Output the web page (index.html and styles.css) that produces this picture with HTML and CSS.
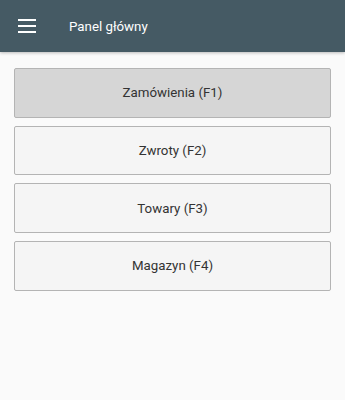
FILE: index.html
```html
<!DOCTYPE html>
<html lang="pl">

<head>
    <meta charset="UTF-8">
    <meta name="viewport" content="width=device-width, initial-scale=1.0">
    <title>Panel główny</title>
    <link rel="stylesheet" href="styles.css">
</head>

<body>
    <header class="toolbar">
        <button class="menu-button" aria-label="Menu">
            <svg width="18" height="14" viewBox="0 0 18 14">
                <rect x="0" y="0" width="18" height="2" fill="#fff" />
                <rect x="0" y="6" width="18" height="2" fill="#fff" />
                <rect x="0" y="12" width="18" height="2" fill="#fff" />
            </svg>
        </button>
        <h1 class="toolbar-title">Panel główny</h1>
    </header>

    <main class="menu-list">
        <button class="menu-item selected">Zamówienia (F1)</button>
        <button class="menu-item">Zwroty (F2)</button>
        <button class="menu-item">Towary (F3)</button>
        <button class="menu-item">Magazyn (F4)</button>
    </main>
</body>

</html>
```

FILE: styles.css
```css
body {
    font-family: Roboto, "Liberation Sans", sans-serif;
    margin: 0;
    padding: 0;
    background-color: #fafafa;
}

.toolbar {
    display: flex;
    align-items: center;
    height: 52px;
    background-color: #455a64;
    box-shadow: 0 1px 3px rgba(0, 0, 0, 0.25);
}

.menu-button {
    display: flex;
    align-items: center;
    justify-content: center;
    width: 18px;
    height: 14px;
    margin-left: 18px;
    padding: 0;
    border: none;
    background: none;
    cursor: pointer;
}

.toolbar-title {
    margin: 0 0 0 33px;
    font-size: 13.3px;
    font-weight: normal;
    color: #fff;
}

.menu-list {
    display: flex;
    flex-direction: column;
    gap: 8px;
    padding: 16px 14px;
}

.menu-item {
    height: 49.7px;
    border: 1px solid #b4b4b4;
    border-radius: 2px;
    background-color: #f5f5f5;
    font-family: Roboto, "Liberation Sans", sans-serif;
    font-size: 13.3px;
    color: #333;
    cursor: pointer;
}

.menu-item.selected {
    background-color: #d6d6d6;
}
```
